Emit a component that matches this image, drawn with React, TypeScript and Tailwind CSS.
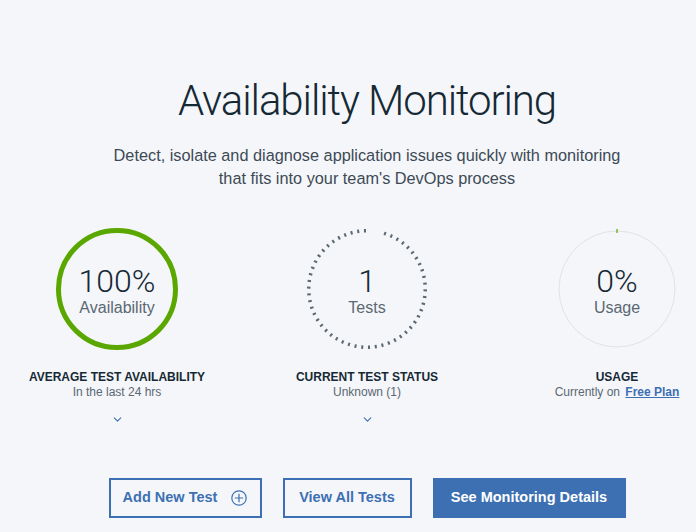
import { ChevronDown } from "lucide-react";

const font = "font-['Liberation_Sans',Arial,sans-serif]";

function Ring({ kind }: { kind: "green" | "ticks" | "usage" }) {
  return (
    <svg width="124" height="124" viewBox="0 0 124 124" className="absolute inset-0">
      {kind === "green" && (
        <circle cx="62" cy="62" r="58.5" fill="none" stroke="#5aa700" strokeWidth="5" />
      )}
      {kind === "ticks" &&
        Array.from({ length: 54 }).map((_, i) => {
          if (i === 1 || i === 2) return null;
          const a = ((i * (360 / 54) - 2) * Math.PI) / 180;
          const r1 = 56.5;
          const r2 = 60;
          return (
            <line
              key={i}
              x1={62 + r1 * Math.sin(a)}
              y1={62 - r1 * Math.cos(a)}
              x2={62 + r2 * Math.sin(a)}
              y2={62 - r2 * Math.cos(a)}
              stroke="#5a6872"
              strokeWidth="2"
            />
          );
        })}
      {kind === "usage" && (
        <>
          <circle cx="62" cy="62" r="58" fill="none" stroke="#dfe3e6" strokeWidth="1" />
          <line x1="62" y1="2" x2="62" y2="6" stroke="#5aa700" strokeWidth="1.2" />
        </>
      )}
    </svg>
  );
}

function Stat({
  kind,
  value,
  unit,
  title,
  children,
  chevron,
}: {
  kind: "green" | "ticks" | "usage";
  value: string;
  unit: string;
  title: string;
  children: React.ReactNode;
  chevron?: boolean;
}) {
  return (
    <div className="flex w-[250px] flex-col items-center">
      <div className="relative flex h-[124px] w-[124px] flex-col items-center justify-center">
        <Ring kind={kind} />
        <span className="mt-[4px] font-['Roboto',sans-serif] text-[32px] font-light leading-[34px] text-[#152935]">
          {value}
        </span>
        <span className="text-[16px] leading-[20px] text-[#5a6872]">{unit}</span>
      </div>
      <div className="mt-[19px] text-[12px] font-bold leading-[14px] text-[#152935]">{title}</div>
      <div className="mt-[1px] text-[12px] leading-[15px] text-[#5a6872]">{children}</div>
      <div className="mt-[13px] h-[12px]">
        {chevron && <ChevronDown className="h-[13px] w-[13px] text-[#3d70b2]" strokeWidth={2} />}
      </div>
    </div>
  );
}

export default function App() {
  return (
    <div className={`h-[532px] w-full overflow-hidden bg-[#f5f6fa] ${font}`}>
      <div className="flex w-[734px] flex-col items-center">
        <h1 className="mt-[76px] font-['Roboto',sans-serif] text-[42px] font-light leading-[50px] tracking-[-1.1px] text-[#152935]">
          Availability Monitoring
        </h1>
        <p className="mt-[18px] w-[515px] text-center text-[16.3px] leading-[23px] text-[#3d4a55]">
          Detect, isolate and diagnose application issues quickly with monitoring that fits into your
          team's DevOps process
        </p>
        <div className="mt-[37px] flex w-[750px] shrink-0">
          <Stat kind="green" value="100%" unit="Availability" title="AVERAGE TEST AVAILABILITY" chevron>
            In the last 24 hrs
          </Stat>
          <Stat kind="ticks" value="1" unit="Tests" title="CURRENT TEST STATUS" chevron>
            Unknown (1)
          </Stat>
          <Stat kind="usage" value="0%" unit="Usage" title="USAGE">
            Currently on{" "}
            <a href="#" className="ml-[2px] font-bold text-[#3d70b2] underline">
              Free Plan
            </a>
          </Stat>
        </div>
        <div className="mt-[53px] flex gap-[21px]">
          <button className="flex h-[40px] w-[153px] items-center justify-center gap-[14px] border-2 border-[#3d70b2] text-[14.5px] font-bold text-[#3d70b2]">
            Add New Test
            <svg width="16" height="16" viewBox="0 0 16 16" fill="none" stroke="#3d70b2" strokeWidth="1.2">
              <circle cx="8" cy="8" r="7.2" />
              <path d="M8 3.8v8.4M3.8 8h8.4" />
            </svg>
          </button>
          <button className="flex h-[40px] w-[129px] items-center justify-center border-2 border-[#3d70b2] text-[14.5px] font-bold text-[#3d70b2]">
            View All Tests
          </button>
          <button className="flex h-[40px] w-[193px] items-center justify-center bg-[#3d70b2] text-[14.5px] font-bold text-white">
            See Monitoring Details
          </button>
        </div>
      </div>
    </div>
  );
}
